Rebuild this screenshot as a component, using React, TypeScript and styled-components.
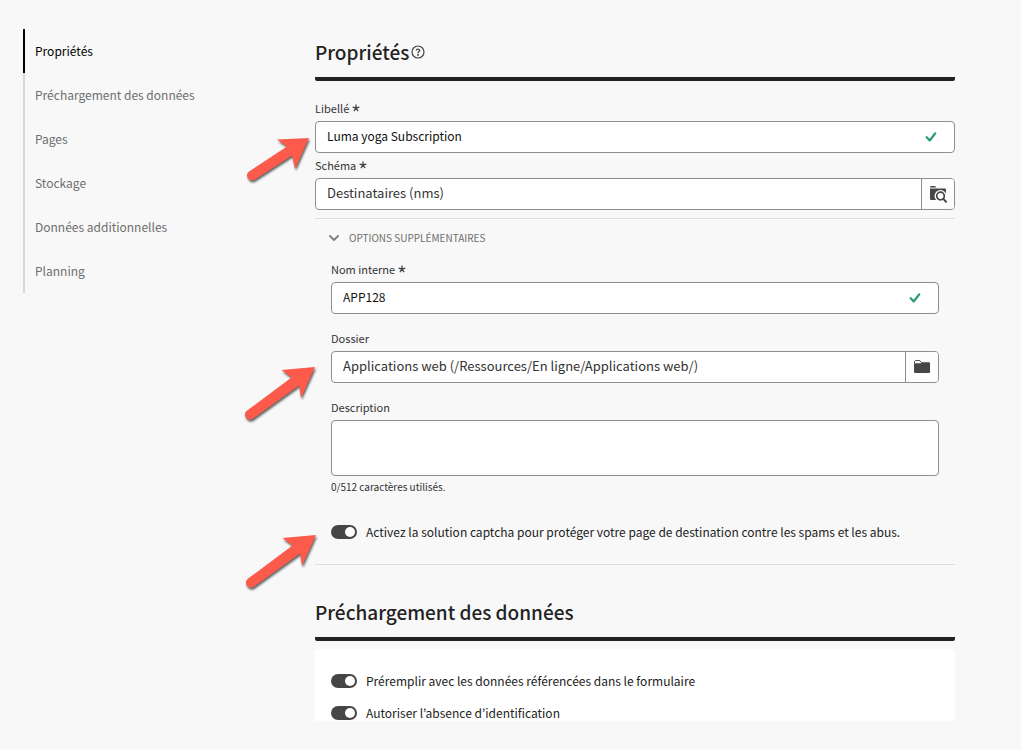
import React, { useState } from 'react';
import styled, { createGlobalStyle, css } from 'styled-components';

const GlobalStyle = createGlobalStyle`
  *, *::before, *::after { box-sizing: border-box; }
  body {
    margin: 0;
    background: #f8f8f8;
    color: #222;
    font-family: "Noto Sans CJK JP", "Noto Sans", sans-serif;
    font-size: 12px;
    line-height: 20px;
  }
  input, textarea, button { font: inherit; color: inherit; }
`;

const Page = styled.div`
  display: flex;
  align-items: flex-start;
  gap: 32px;
  padding: 29px 66px 28px 23px;
`;

const SideNav = styled.nav`
  flex: 0 0 260px;
  display: flex;
  flex-direction: column;
`;

const NavLink = styled.a<{ $active?: boolean }>`
  display: flex;
  align-items: center;
  height: 44px;
  padding-left: 10px;
  border-left: 2px solid ${(p) => (p.$active ? '#000' : '#d8d8d8')};
  color: ${(p) => (p.$active ? '#000' : '#6e6e6e')};
  text-decoration: none;
`;

const Main = styled.main`
  flex: 1;
  min-width: 0;
`;

const SectionHeader = styled.header`
  display: flex;
  align-items: center;
  gap: 2px;
  height: 52px;
  padding-bottom: 2px;
  border-bottom: 4px solid #222;
  border-radius: 2px;
`;

const SectionTitle = styled.h2`
  margin: 0;
  font-size: 19px;
  line-height: 24px;
  font-weight: 500;
`;

const HelpButton = styled.button`
  display: flex;
  padding: 0;
  border: 0;
  background: none;
  color: #444;
`;

const Field = styled.div`
  position: relative;
  display: flex;
  flex-direction: column;
`;

const Label = styled.label`
  display: flex;
  align-items: center;
  gap: 3px;
  height: 24px;
  padding-bottom: 3px;
  font-size: 11px;
  color: #333;
`;

const frame = css`
  width: 100%;
  border: 1px solid #8e8e8e;
  border-radius: 4px;
  background: #fff;
`;

const InputBox = styled.div`
  ${frame}
  display: flex;
  align-items: center;
  height: 32px;
  overflow: hidden;
`;

const TextInput = styled.input<{ $picker?: boolean }>`
  flex: 1;
  min-width: 0;
  height: 30px;
  padding: 0 11px 4px;
  border: 0;
  outline: 0;
  background: transparent;
  font-size: ${(p) => (p.$picker ? 13 : 12)}px;
  color: ${(p) => (p.$picker ? '#333' : '#111')};
`;

const ValidMark = styled.span`
  display: flex;
  margin-right: 17px;
`;

const PickerButton = styled.button`
  display: flex;
  align-items: center;
  justify-content: center;
  width: 33px;
  height: 30px;
  padding: 0;
  border: 0;
  border-left: 1px solid #8e8e8e;
  background: #fdfdfd;
`;

const TextArea = styled.textarea`
  ${frame}
  display: block;
  height: 56px;
  padding: 6px 11px;
  resize: none;
`;

const HelpText = styled.p`
  margin: 0;
  font-size: 10px;
  line-height: 22px;
  color: #333;
`;

const MainFields = styled.div`
  display: flex;
  flex-direction: column;
  gap: 1px;
  padding: 16px 0 8px;
`;

const Options = styled.section`
  display: flex;
  flex-direction: column;
  padding: 8px 16px 16px;
  border-top: 1px solid #dedede;
  border-bottom: 1px solid #dedede;
`;

const Disclosure = styled.button`
  display: flex;
  align-items: center;
  gap: 10px;
  width: max-content;
  height: 22px;
  margin: 0 0 9px -2px;
  padding: 0;
  border: 0;
  background: none;
  font-size: 10px;
  color: #6e6e6e;
`;

const OptionFields = styled.div`
  display: flex;
  flex-direction: column;
  gap: 13px;
`;

const SwitchRow = styled.label`
  display: flex;
  align-items: center;
  gap: 9px;
  min-height: 32px;
`;

const Switch = styled.input`
  appearance: none;
  flex: none;
  width: 26px;
  height: 14px;
  margin: 0;
  border-radius: 7px;
  background: #b1b1b1;
  &::before {
    content: "";
    display: block;
    width: 10px;
    height: 10px;
    margin: 2px;
    border-radius: 50%;
    background: #fff;
  }
  &:checked { background: #464646; }
  &:checked::before { margin-left: 14px; }
`;

const CaptchaArea = styled.div`
  padding-top: 18px;
`;

const Preload = styled.section`
  padding-top: 24px;
`;

const Card = styled.div`
  height: 72px;
  margin-top: 8px;
  padding: 16px 16px 0;
  overflow: hidden;
  border-radius: 4px 4px 0 0;
  background: #fff;
`;

const Pointer = styled.svg<{ $right: number; $top: number }>`
  position: absolute;
  top: ${(p) => p.$top}px;
  right: calc(100% + ${(p) => p.$right}px);
  overflow: visible;
  pointer-events: none;
  filter: drop-shadow(1px 2px 1px rgba(0, 0, 0, 0.6));
`;

const SHORT_ARROW =
  'M62 0 L48 31 L45 17.500 L7.500 41.800 A5 5 0 0 1 2 33.500 L40 8.500 L30 1.500 Z';
const LONG_ARROW =
  'M70 0 L56 31 L54 18.500 L7.500 52 A5 5 0 0 1 1.800 43.800 L46.500 10.500 L36.500 3 Z';

function Arrow({ d, w, right, top }: { d: string; w: number; right: number; top: number }) {
  return (
    <Pointer $right={right} $top={top} width={w} height={52} aria-hidden="true">
      <path d={d} fill="#fc5a4b" />
    </Pointer>
  );
}

const Asterisk = () => (
  <svg width="8" height="8" viewBox="0 0 8 8" aria-hidden="true">
    <path
      d="M4 4V.5M4 4L.6 3.100M4 4L7.400 3.100M4 4L1.900 7.200M4 4L6.100 7.200"
      stroke="#444"
      strokeWidth="1.300"
    />
  </svg>
);

const Check = () => (
  <svg width="12" height="10" viewBox="0 0 12 10" aria-hidden="true">
    <path d="M1.700 5.200L4.700 8.500L10.300 1.300" fill="none" stroke="#2d9d78" strokeWidth="2.200" strokeLinecap="round" strokeLinejoin="round" />
  </svg>
);

const HelpIcon = () => (
  <svg width="14" height="14" viewBox="0 0 14 14" fill="none" stroke="currentColor" aria-hidden="true">
    <circle cx="7" cy="7" r="6" strokeWidth="1.200" />
    <path d="M5.200 5.500C5.400 3.600 8.700 3.700 8.700 5.400C8.700 6.600 7 6.600 7 8.200" strokeWidth="1.300" />
    <circle cx="7" cy="10" r=".9" fill="currentColor" stroke="none" />
  </svg>
);

const Chevron = () => (
  <svg width="10" height="6" viewBox="0 0 10 6" aria-hidden="true">
    <path d="M1 1L5 5L9 1" fill="none" stroke="#808080" strokeWidth="1.900" strokeLinecap="round" strokeLinejoin="round" />
  </svg>
);

const FolderIcon = () => (
  <svg width="16" height="14" viewBox="0 0 16 14" aria-hidden="true">
    <path d="M.5 3V1.500L1.300.6H5.800L7.600 2.700" fill="#fff" stroke="#464646" />
    <path d="M0 3.200H7L8 2.200H15.200L16 3V12.300L15.200 13H.8L0 12.300Z" fill="#464646" />
  </svg>
);

const FolderSearchIcon = () => (
  <svg width="18" height="18" viewBox="-1 0 18 18" aria-hidden="true">
    <path d="M0 1.800L.8 1H5L6.500 2.500H0Z" fill="#464646" />
    <path d="M0 3.500H15.200L16 4.200V15H.8L0 14.300Z" fill="#464646" />
    <circle cx="10.500" cy="11" r="6" fill="#fdfdfd" />
    <path d="M12 14L16 18L18 16L16 12Z" fill="#fdfdfd" />
    <circle cx="10.500" cy="11" r="3.800" fill="none" stroke="#464646" strokeWidth="1.700" />
    <path d="M13.400 13.900L16 16.700" stroke="#464646" strokeWidth="2" strokeLinecap="round" />
  </svg>
);

const NAV = ['Propriétés', 'Préchargement des données', 'Pages', 'Stockage', 'Données additionnelles', 'Planning'];

function Toggle({ children }: { children: React.ReactNode }) {
  const [on, setOn] = useState(true);
  return (
    <SwitchRow>
      <Switch type="checkbox" role="switch" checked={on} onChange={() => setOn(!on)} />
      {children}
    </SwitchRow>
  );
}

export default function App() {
  return (
    <>
      <GlobalStyle />
      <Page>
        <SideNav>
          {NAV.map((item, i) => (
            <NavLink key={item} href={`#section-${i}`} $active={i === 0}>
              {item}
            </NavLink>
          ))}
        </SideNav>
        <Main>
          <SectionHeader id="section-0">
            <SectionTitle>Propriétés</SectionTitle>
            <HelpButton type="button" aria-label="Aide">
              <HelpIcon />
            </HelpButton>
          </SectionHeader>
          <MainFields>
            <Field>
              <Label htmlFor="label">
                Libellé <Asterisk />
              </Label>
              <InputBox>
                <TextInput id="label" defaultValue="Luma yoga Subscription" required />
                <ValidMark>
                  <Check />
                </ValidMark>
              </InputBox>
              <Arrow d={SHORT_ARROW} w={62} right={6} top={41} />
            </Field>
            <Field>
              <Label htmlFor="schema">
                Schéma <Asterisk />
              </Label>
              <InputBox>
                <TextInput id="schema" defaultValue="Destinataires (nms)" required $picker />
                <PickerButton type="button" aria-label="Choisir un schéma">
                  <FolderSearchIcon />
                </PickerButton>
              </InputBox>
            </Field>
          </MainFields>
          <Options>
            <Disclosure type="button" aria-expanded="true">
              <Chevron />
              OPTIONS SUPPLÉMENTAIRES
            </Disclosure>
            <OptionFields>
              <Field>
                <Label htmlFor="name">
                  Nom interne <Asterisk />
                </Label>
                <InputBox>
                  <TextInput id="name" defaultValue="APP128" required />
                  <ValidMark>
                    <Check />
                  </ValidMark>
                </InputBox>
              </Field>
              <Field>
                <Label htmlFor="folder">Dossier</Label>
                <InputBox>
                  <TextInput id="folder" defaultValue="Applications web (/Ressources/En ligne/Applications web/)" $picker />
                  <PickerButton type="button" aria-label="Choisir un dossier">
                    <FolderIcon />
                  </PickerButton>
                </InputBox>
                <Arrow d={LONG_ARROW} w={70} right={16} top={40} />
              </Field>
              <Field>
                <Label htmlFor="description">Description</Label>
                <TextArea id="description" maxLength={512} />
                <HelpText>0/512 caractères utilisés.</HelpText>
              </Field>
            </OptionFields>
            <CaptchaArea>
              <Field>
                <Toggle>Activez la solution captcha pour protéger votre page de destination contre les spams et les abus.</Toggle>
                <Arrow d={LONG_ARROW} w={70} right={15} top={19} />
              </Field>
            </CaptchaArea>
          </Options>
          <Preload id="section-1">
            <SectionHeader>
              <SectionTitle>Préchargement des données</SectionTitle>
            </SectionHeader>
            <Card>
              <Toggle>Préremplir avec les données référencées dans le formulaire</Toggle>
              <Toggle>Autoriser l’absence d’identification</Toggle>
            </Card>
          </Preload>
        </Main>
      </Page>
    </>
  );
}
